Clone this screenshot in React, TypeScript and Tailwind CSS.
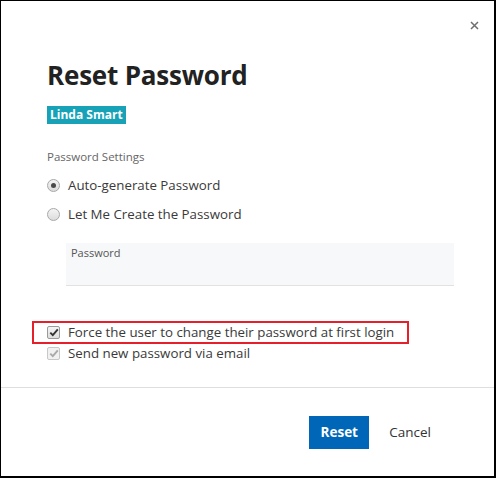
import React from "react";

const font = { fontFamily: '"Open Sans", "Noto Sans", Arial, sans-serif' };

function Radio({ checked }: { checked?: boolean }) {
  return (
    <span className="w-[13px] h-[13px] rounded-full border border-[#a8a8a8] bg-gradient-to-b from-[#f4f4f4] to-[#dcdcdc] flex items-center justify-center shrink-0">
      {checked && <span className="w-[5px] h-[5px] rounded-full bg-[#4a4a4a]" />}
    </span>
  );
}

function Checkbox({ disabled }: { disabled?: boolean }) {
  return (
    <span
      className={
        "w-[13px] h-[13px] rounded-[2px] border flex items-center justify-center shrink-0 " +
        (disabled
          ? "border-[#c8c8c8] bg-[#f1f1f1]"
          : "border-[#9a9a9a] bg-gradient-to-b from-[#f4f4f4] to-[#dedede]")
      }
    >
      <svg width="10" height="9" viewBox="0 0 10 9">
        <path
          d="M1.3 4.6 L3.8 7.2 L8.8 1.4"
          fill="none"
          stroke={disabled ? "#a9a9a9" : "#333"}
          strokeWidth="1.9"
        />
      </svg>
    </span>
  );
}

export default function App() {
  return (
    <div
      style={font}
      className="w-[496px] h-[478px] bg-white border-l border-t border-r-2 border-b-2 border-black flex flex-col"
    >
      <div className="flex justify-end pt-[20px] pr-[15px] h-[61px]">
        <svg width="9" height="9" viewBox="0 0 9 9">
          <path d="M1 1 L8 8 M8 1 L1 8" stroke="#6f6f6f" strokeWidth="1.5" />
        </svg>
      </div>
      <div className="pl-[46px] flex flex-col">
        <h1 className="text-[26px] leading-[26px] font-bold text-[#222] tracking-[-0.2px]">
          Reset Password
        </h1>
        <div className="mt-[18px] flex">
          <span className="bg-[#17a2b8] text-white font-bold text-[12px] h-[18px] leading-[18px] px-[3px]">
            Linda Smart
          </span>
        </div>
        <div className="mt-[25px] text-[11.5px] leading-[16px] text-[#666]">Password Settings</div>
        <div className="mt-[10px] flex flex-col gap-[9px] text-[13.3px] text-[#3a3a3a]">
          <label className="flex items-center gap-[8px] h-[20px] leading-[20px]">
            <Radio checked />
            <span>Auto-generate Password</span>
          </label>
          <label className="flex items-center gap-[8px] h-[20px] leading-[20px]">
            <Radio />
            <span>Let Me Create the Password</span>
          </label>
        </div>
        <div className="mt-[19px] ml-[19px] w-[388px] h-[43px] bg-[#f7f8fa] border-b border-[#e2e2e2] px-[5px] pt-[3px]">
          <div className="text-[11px] leading-[14px] text-[#555]">Password</div>
        </div>
        <div className="mt-[35px] flex flex-col text-[13.3px] text-[#3a3a3a]">
          <div className="ml-[-15px] w-[377px] h-[23px] border-2 border-[#e5202b] pl-[13px] flex items-center gap-[8px] leading-[19px]">
            <Checkbox />
            <span>Force the user to change their password at first login</span>
          </div>
          <div className="flex items-center gap-[8px] h-[19px] leading-[19px]">
            <Checkbox disabled />
            <span>Send new password via email</span>
          </div>
        </div>
      </div>
      <div className="mt-[24px] border-t border-[#dedede]" />
      <div className="mt-[28px] flex justify-end items-center pr-[63px]">
        <button className="w-[60px] h-[33px] bg-[#0067b8] text-white font-bold text-[13.5px]">Reset</button>
        <button className="ml-[20px] text-[13.5px] text-[#333]">Cancel</button>
      </div>
    </div>
  );
}
